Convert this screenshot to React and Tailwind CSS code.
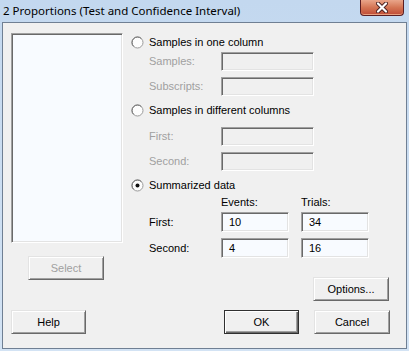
import React from 'react';

const font = { fontFamily: '"Liberation Sans", Arial, sans-serif' };

const Radio = ({ checked }) => (
  <svg width="13" height="13" viewBox="0 0 13 13" className="shrink-0">
    <circle cx="6.5" cy="6.5" r="5.5" fill="#fdfdfd" stroke="#9a9a9a" />
    <path d="M2.6 10.4 A5.5 5.5 0 0 1 10.4 2.6" fill="none" stroke="#707070" />
    {checked && <circle cx="6.5" cy="6.5" r="2" fill="#111" />}
  </svg>
);

const Field = ({ value, disabled, w = 'w-[93px]', h = 'h-[19px]' }) => (
  <div
    className={`${w} ${h} border border-t-[#a0a0a0] border-l-[#a0a0a0] border-b-white border-r-white shadow-[inset_1px_1px_0_#696969,inset_-1px_-1px_0_#e3e3e3] ${
      disabled ? 'bg-[#f0f0f0]' : 'bg-[#f8fbff]'
    } pl-[7px] flex items-center text-[11px] text-black`}
  >
    {value}
  </div>
);

const Btn = ({ children, disabled, isDefault, className = '' }) => (
  <div
    className={`w-[75px] h-[24px] flex items-center justify-center bg-[#f0f0f0] text-[11px] ${
      disabled ? 'text-[#a0a0a0]' : 'text-black'
    } ${
      isDefault
        ? 'border border-[#303030] shadow-[inset_1px_1px_0_#ffffff,inset_-1px_-1px_0_#696969,inset_-2px_-2px_0_#a0a0a0]'
        : 'border border-t-[#e3e3e3] border-l-[#e3e3e3] border-r-[#696969] border-b-[#696969] shadow-[inset_1px_1px_0_#ffffff,inset_-1px_-1px_0_#a0a0a0]'
    } ${className}`}
  >
    {children}
  </div>
);

const Row = ({ label, disabled, className = '' }) => (
  <div className={`flex items-center ${className}`}>
    <span className={`ml-[18px] w-[72px] text-[11px] ${disabled ? 'text-[#a0a0a0]' : 'text-black'}`}>{label}</span>
    <Field disabled={disabled} />
  </div>
);

export default function App() {
  return (
    <div
      className="w-[409px] h-[351px] bg-gradient-to-b from-[#c3d8ef] to-[#d3e3f4] flex flex-col overflow-hidden"
      style={font}
    >
      {/* title bar */}
      <div className="h-[22px] flex items-start justify-between shrink-0">
        <div
          className="pl-[3px] pt-[3px] text-[11.5px] text-black"
          style={{ fontFamily: '"Noto Sans", "Open Sans", sans-serif', lineHeight: '16px' }}
        >
          2 Proportions (Test and Confidence Interval)
        </div>
        <div className="mr-[5px] w-[44px] h-[16px] rounded-b-[4px] border border-t-0 border-[#5b1e22] bg-gradient-to-b from-[#e9a58a] via-[#d47554] to-[#bf4a35] flex items-center justify-center shadow-[inset_0_-1px_0_#e8a080]">
          <svg width="12" height="11" viewBox="0 0 12 11">
            <path d="M2 1.5 L10 9.5 M10 1.5 L2 9.5" stroke="#4a2020" strokeWidth="4" strokeLinecap="round" />
            <path d="M2 1.5 L10 9.5 M10 1.5 L2 9.5" stroke="#ffffff" strokeWidth="2.2" strokeLinecap="round" />
          </svg>
        </div>
      </div>

      {/* client area */}
      <div className="ml-[2px] w-[405px] h-[327px] border border-[#6f7f93] bg-[#f0f0f0] flex flex-col shrink-0">
        <div className="flex">
          {/* left column */}
          <div className="ml-[8px] mt-[10px] flex flex-col">
            <div className="w-[112px] h-[210px] border border-t-[#a0a0a0] border-l-[#a0a0a0] border-b-white border-r-white shadow-[inset_1px_1px_0_#696969,inset_-1px_-1px_0_#e3e3e3] bg-[#f8fbff]" />
            <Btn disabled className="mt-[13px] ml-[17px] h-[23px] w-[76px]">
              Select
            </Btn>
          </div>

          {/* right column */}
          <div className="ml-[8px] w-[258px] flex flex-col">
            <div className="mt-[13px] h-[13px] flex items-center gap-[5px] text-[11px] text-black">
              <Radio />
              <span>Samples in one column</span>
            </div>
            <Row label="Samples:" disabled className="mt-[3px]" />
            <Row label="Subscripts:" disabled className="mt-[6px]" />

            <div className="mt-[8px] h-[13px] flex items-center gap-[5px] text-[11px] text-black">
              <Radio />
              <span>Samples in different columns</span>
            </div>
            <Row label="First:" disabled className="mt-[10px]" />
            <Row label="Second:" disabled className="mt-[6px]" />

            <div className="mt-[8px] h-[13px] flex items-center gap-[5px] text-[11px] text-black">
              <Radio checked />
              <span>Summarized data</span>
            </div>
            <div className="mt-[4px] h-[13px] flex items-center text-[11px] text-black">
              <span className="ml-[90px] w-[80px]">Events:</span>
              <span>Trials:</span>
            </div>
            <div className="mt-[3px] flex items-center text-[11px] text-black">
              <span className="ml-[18px] w-[72px]">First:</span>
              <Field value="10" w="w-[68px]" h="h-[20px]" />
              <div className="ml-[12px]">
                <Field value="34" w="w-[68px]" h="h-[20px]" />
              </div>
            </div>
            <div className="mt-[6px] flex items-center text-[11px] text-black">
              <span className="ml-[18px] w-[72px]">Second:</span>
              <Field value="4" w="w-[68px]" h="h-[20px]" />
              <div className="ml-[12px]">
                <Field value="16" w="w-[68px]" h="h-[20px]" />
              </div>
            </div>

            <div className="mt-[19px] flex justify-end">
              <Btn className="w-[76px] h-[24px]">Options...</Btn>
            </div>
          </div>
        </div>

        {/* bottom buttons */}
        <div className="mt-[9px] flex items-center">
          <Btn className="ml-[8px]">Help</Btn>
          <Btn isDefault className="ml-[138px]">OK</Btn>
          <Btn className="ml-[15px] w-[76px]">Cancel</Btn>
        </div>
      </div>
    </div>
  );
}
